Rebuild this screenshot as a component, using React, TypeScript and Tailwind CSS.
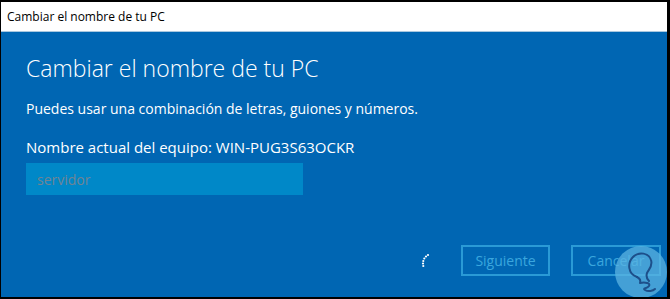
import React from "react";

export default function App() {
  return (
    <div className="w-[670px] h-[299px] bg-black p-[1px] pr-[3px] pb-[2px] pt-[2px]" style={{ fontFamily: '"Open Sans", "Noto Sans", sans-serif' }}>
      <div className="w-full h-full flex flex-col bg-[#0066b3] relative overflow-hidden">
        <div className="h-[30px] bg-white flex items-center pl-[6px] text-[12px] text-black border-b border-[#a9c8df]">
          Cambiar el nombre de tu PC
        </div>
        <div className="flex-1 flex flex-col pl-[25px] pr-[6px] text-white">
          <div className="mt-[21px] text-[23px] font-light leading-[30px]">Cambiar el nombre de tu PC</div>
          <div className="mt-[16px] text-[14px] leading-[20px]">Puedes usar una combinación de letras, guiones y números.</div>
          <div className="mt-[18px] text-[15px] leading-[20px]">Nombre actual del equipo: WIN-PUG3S63OCKR</div>
          <div className="mt-[6px] w-[277px] h-[32px] bg-[#0088c8] flex items-center pl-[11px] text-[14px] text-[#708494]">servidor</div>
          <div className="flex-1" />
          <div className="flex items-center justify-end gap-[21px] mb-[21px]">
            <svg width="10" height="16" viewBox="0 0 10 16" className="mr-[9px]">
              {[[7,2],[5,3.5],[3.3,5.5],[2.3,8],[2,10.5],[2.3,13]].map(([x,y],i)=>(<circle key={i} cx={x} cy={y} r="1.1" fill="white" />))}
            </svg>
            <div className="w-[89px] h-[31px] border-2 border-[#2a9ad6] flex items-center justify-center text-[14px] text-[#3aa6de]">Siguiente</div>
            <div className="w-[90px] h-[31px] border-2 border-[#2a9ad6] flex items-center justify-center text-[14px] text-[#3aa6de]">Cancelar</div>
          </div>
        </div>
        <div className="absolute left-[614px] top-[244px] w-[52px] h-[52px] rounded-full bg-[#5bb4e2]/75">
          <svg width="52" height="52" viewBox="0 0 52 52" fill="none" stroke="#1d4f8a" strokeWidth="2" strokeLinecap="round" strokeLinejoin="round">
            <path d="M22 31 C13 28 12 17 18 11 C24 5 34 7 36 14 C38 20 34 23 32 27 C31 30 32 33 34 35" />
            <path d="M22 31 C24 32 26 34 25 37 C30 36 36 37 34 40 C32 43 27 42 30 44 C33 46 38 45 40 43" />
          </svg>
        </div>
      </div>
    </div>
  );
}
